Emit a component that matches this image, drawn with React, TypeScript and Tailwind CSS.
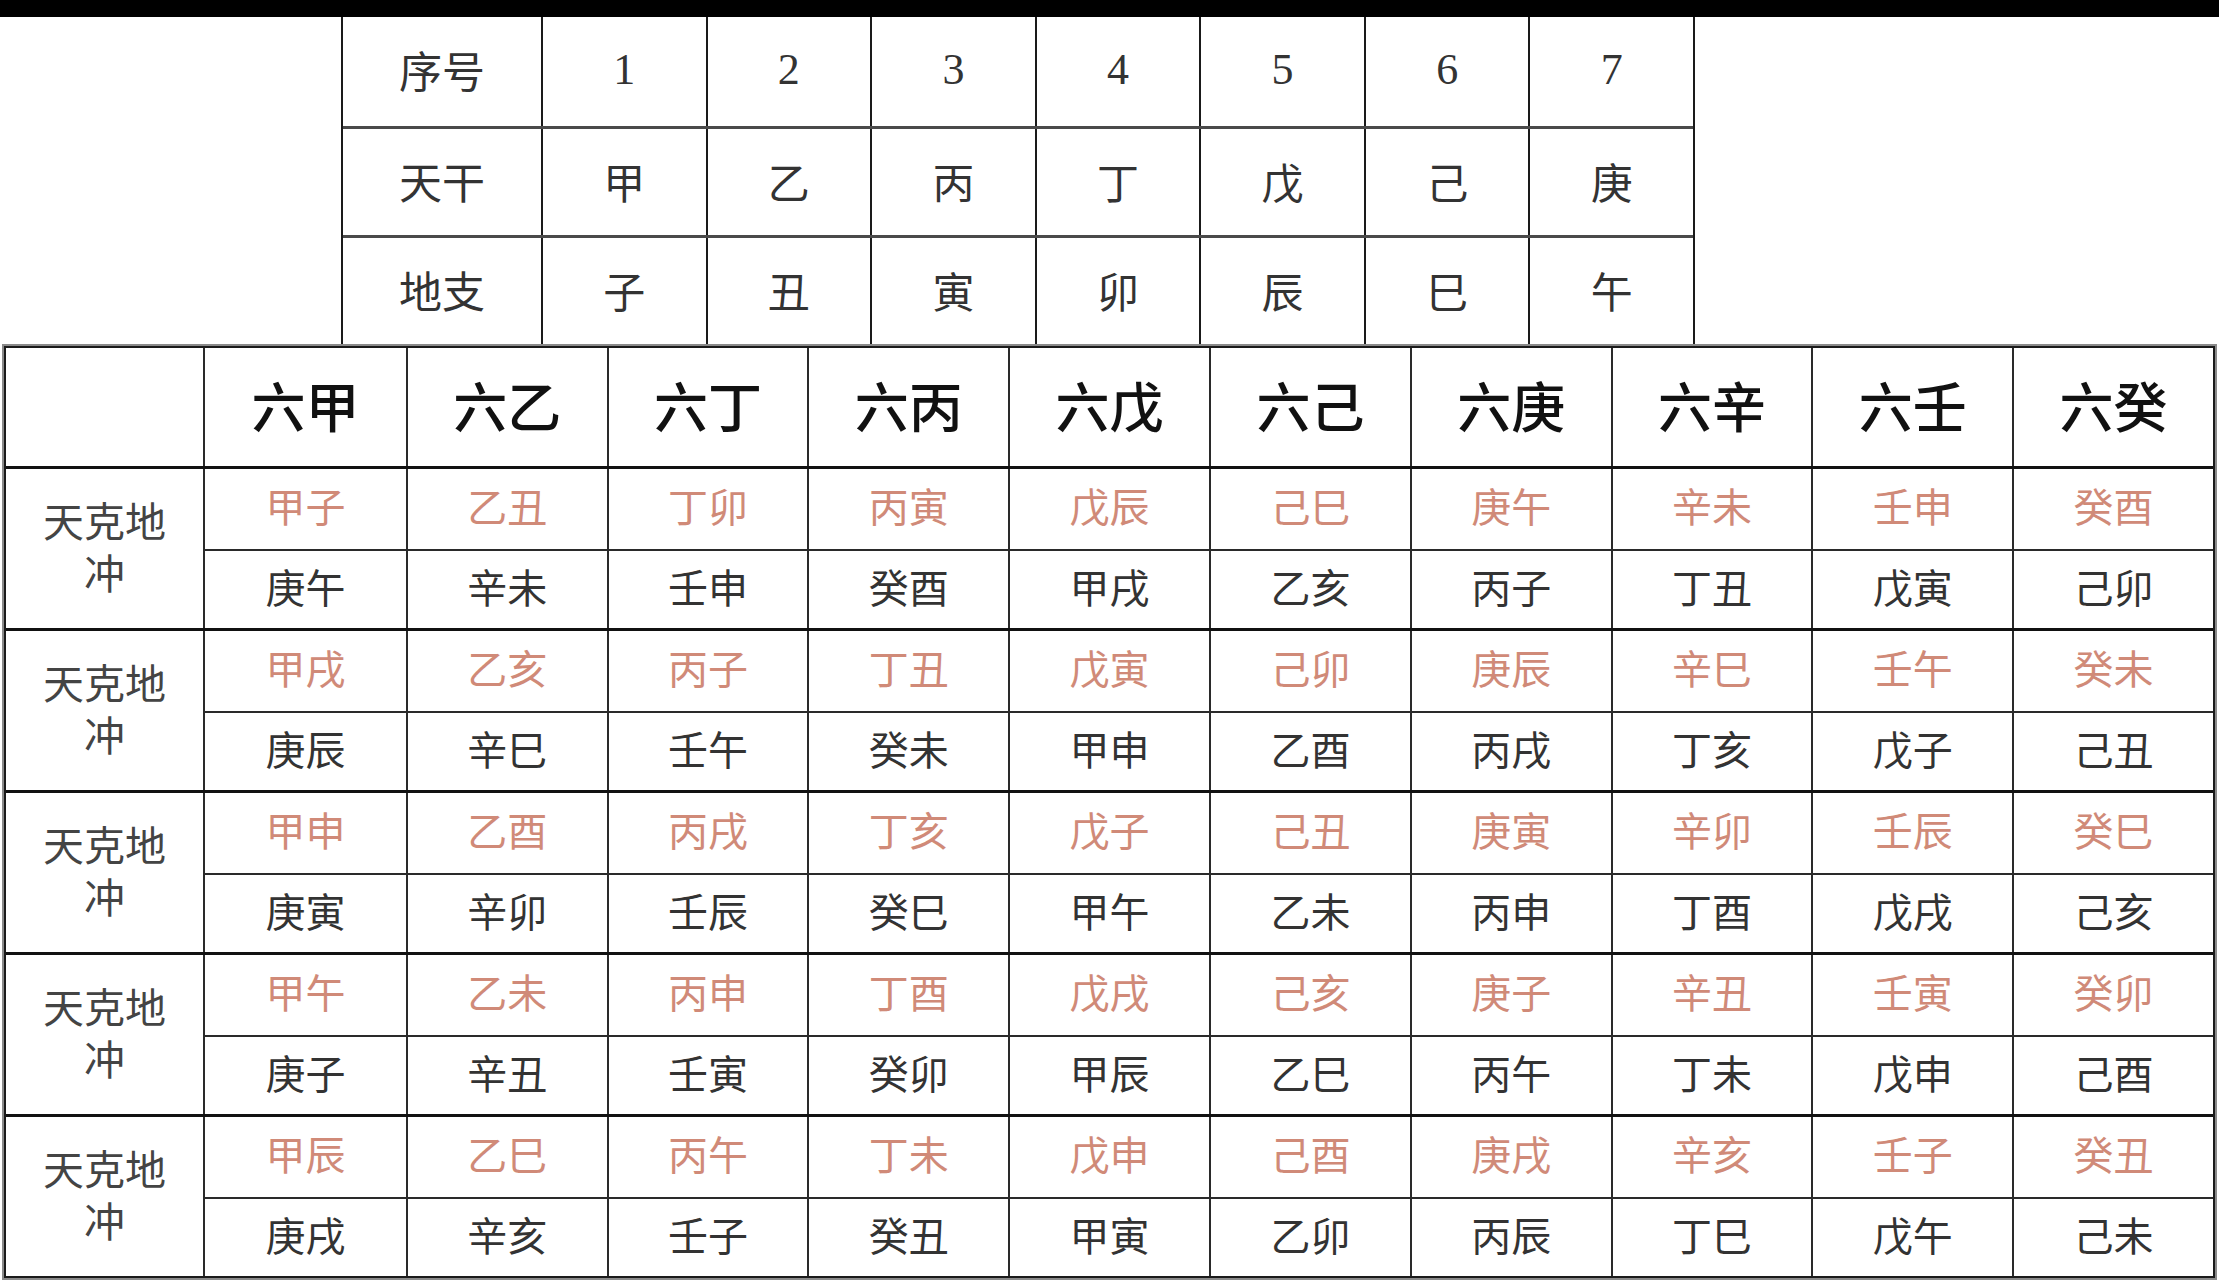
const cjk = "font-['Noto_Sans_CJK_SC',sans-serif]";

const topRows = [
  { label: "序号", cells: ["1", "2", "3", "4", "5", "6", "7"], digits: true },
  { label: "天干", cells: ["甲", "乙", "丙", "丁", "戊", "己", "庚"] },
  { label: "地支", cells: ["子", "丑", "寅", "卯", "辰", "巳", "午"] },
];

const heads = ["六甲", "六乙", "六丁", "六丙", "六戊", "六己", "六庚", "六辛", "六壬", "六癸"];

const groups = [
  {
    red: ["甲子", "乙丑", "丁卯", "丙寅", "戊辰", "己巳", "庚午", "辛未", "壬申", "癸酉"],
    black: ["庚午", "辛未", "壬申", "癸酉", "甲戌", "乙亥", "丙子", "丁丑", "戊寅", "己卯"],
  },
  {
    red: ["甲戌", "乙亥", "丙子", "丁丑", "戊寅", "己卯", "庚辰", "辛巳", "壬午", "癸未"],
    black: ["庚辰", "辛巳", "壬午", "癸未", "甲申", "乙酉", "丙戌", "丁亥", "戊子", "己丑"],
  },
  {
    red: ["甲申", "乙酉", "丙戌", "丁亥", "戊子", "己丑", "庚寅", "辛卯", "壬辰", "癸巳"],
    black: ["庚寅", "辛卯", "壬辰", "癸巳", "甲午", "乙未", "丙申", "丁酉", "戊戌", "己亥"],
  },
  {
    red: ["甲午", "乙未", "丙申", "丁酉", "戊戌", "己亥", "庚子", "辛丑", "壬寅", "癸卯"],
    black: ["庚子", "辛丑", "壬寅", "癸卯", "甲辰", "乙巳", "丙午", "丁未", "戊申", "己酉"],
  },
  {
    red: ["甲辰", "乙巳", "丙午", "丁未", "戊申", "己酉", "庚戌", "辛亥", "壬子", "癸丑"],
    black: ["庚戌", "辛亥", "壬子", "癸丑", "甲寅", "乙卯", "丙辰", "丁巳", "戊午", "己未"],
  },
];

const TopTable = () => (
  <div className="ml-[341px] w-[1354px] border-x-2 border-[#1a1a1a]">
    {topRows.map((row, i) => (
      <div
        key={row.label}
        className={`flex ${i === 0 ? "h-[109px]" : "h-[109px] border-t-[3px] border-[#4a4a4a]"}`}
      >
        <div className={`w-[198px] pb-[4px] flex items-center justify-center text-[43px] text-[#333] ${cjk}`}>
          {row.label}
        </div>
        {row.cells.map((c) => (
          <div
            key={c}
            className={`flex-1 border-l-2 border-[#1a1a1a] pb-[4px] flex items-center justify-center text-[#333] ${
              row.digits ? "font-['Liberation_Serif',serif] text-[44px]" : `${cjk} text-[42px]`
            }`}
          >
            {c}
          </div>
        ))}
      </div>
    ))}
  </div>
);

const MainTable = () => (
  <div className="mx-[2px] border-2 border-[#8a8a8a]">
    <div className="h-[932px] border-2 border-[#1a1a1a] flex flex-col">
      <div className="h-[118px] flex">
        <div className="w-[197px]" />
        <div className="flex-1 grid grid-cols-10 border-l-2 border-[#2a2a2a]">
          {heads.map((h, i) => (
            <div
              key={h}
              className={`pb-[6px] flex items-center justify-center text-[54px] font-medium text-[#111] ${cjk} ${
                i > 0 ? "border-l-2 border-[#2a2a2a]" : ""
              }`}
            >
              {h}
            </div>
          ))}
        </div>
      </div>
      {groups.map((g, gi) => (
        <div key={gi} className="flex-1 flex border-t-[3px] border-[#111]">
          <div
            className={`w-[197px] pb-[8px] flex items-center justify-center text-center text-[41px] leading-[52px] text-[#444] ${cjk}`}
          >
            <span>
              天克地
              <br />冲
            </span>
          </div>
          <div className="flex-1 grid grid-cols-10 grid-rows-2 border-l-2 border-[#2a2a2a]">
            {g.red.map((t, i) => (
              <div
                key={"r" + i}
                className={`pb-[8px] flex items-center justify-center text-[40px] text-[#d08a78] ${cjk} ${
                  i > 0 ? "border-l-2 border-[#2a2a2a]" : ""
                }`}
              >
                {t}
              </div>
            ))}
            {g.black.map((t, i) => (
              <div
                key={"b" + i}
                className={`pb-[6px] flex items-center justify-center text-[40px] text-[#333] border-t-2 border-[#2a2a2a] ${cjk} ${
                  i > 0 ? "border-l-2" : ""
                }`}
              >
                {t}
              </div>
            ))}
          </div>
        </div>
      ))}
    </div>
  </div>
);

export default function App() {
  return (
    <div className="w-[2219px] h-[1280px] bg-white overflow-hidden">
      <div className="h-[17px] bg-black" />
      <TopTable />
      <MainTable />
    </div>
  );
}
